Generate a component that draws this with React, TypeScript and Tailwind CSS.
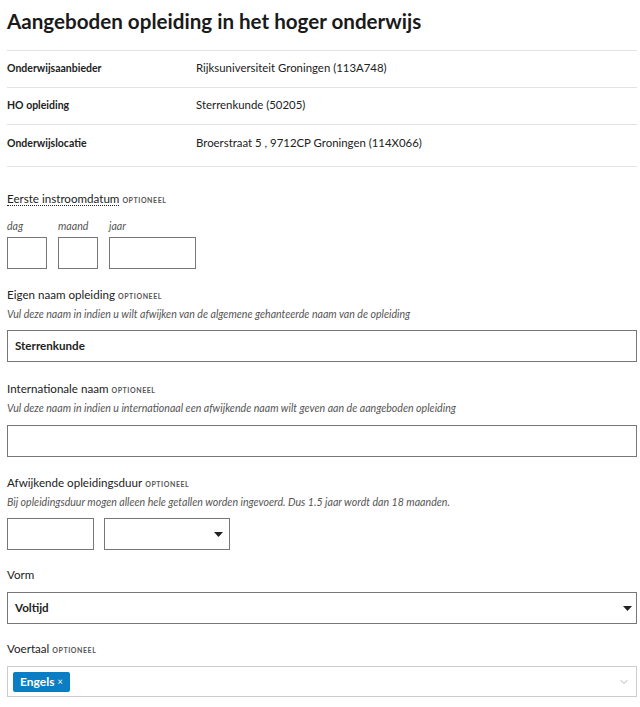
import { ChevronDown } from 'lucide-react';

const font = { fontFamily: 'Lato, "Noto Sans", sans-serif' };

function Optioneel() {
  return (
    <span className="ml-[3px] text-[7px] font-bold uppercase tracking-[0.08em] text-[#555]">optioneel</span>
  );
}

function Label({ children, optional = false }: { children: React.ReactNode; optional?: boolean }) {
  return (
    <div className="text-[11.6px] leading-[16px] text-[#222]">
      {children}
      {optional && <Optioneel />}
    </div>
  );
}

function Help({ children }: { children: React.ReactNode }) {
  return <div className="mt-[3px] text-[10.6px] italic leading-[14px] text-[#555]">{children}</div>;
}

function Caret() {
  return (
    <svg width="9" height="5" viewBox="0 0 9 5" className="shrink-0">
      <path d="M0 0h9L4.5 5z" fill="#222" />
    </svg>
  );
}

const rows = [
  ['Onderwijsaanbieder', 'Rijksuniversiteit Groningen (113A748)'],
  ['HO opleiding', 'Sterrenkunde (50205)'],
  ['Onderwijslocatie', 'Broerstraat 5 , 9712CP Groningen (114X066)'],
];

export default function App() {
  return (
    <div className="min-h-[707px] bg-white pl-[7px] pr-[3px] pt-[8px] text-[#222]" style={font}>
      <h1 className="text-[20.6px] font-bold leading-[26px] text-[#1a1a1a]">
        Aangeboden opleiding in het hoger onderwijs
      </h1>

      {/* Gegevens */}
      <div className="mt-[16px] border-t border-[#e3e3e3]">
        {rows.map(([k, v], i) => (
          <div
            key={k}
            className={`flex border-b border-[#e3e3e3] ${i === 2 ? 'h-[42px] pt-[10px]' : 'h-[37px] pt-[9px]'}`}
          >
            <div className="w-[189px] text-[10.5px] font-bold leading-[16px]">{k}</div>
            <div className="text-[11.4px] leading-[16px]">{v}</div>
          </div>
        ))}
      </div>

      {/* Eerste instroomdatum */}
      <div className="mt-[24px]">
        <div className="text-[11.6px] leading-[16px]">
          <span className="border-b border-dotted border-[#222]">Eerste instroomdatum</span>
          <Optioneel />
        </div>
        <div className="mt-[11px] flex gap-[11px]">
          {[
            ['dag', 'w-[40px]'],
            ['maand', 'w-[40px]'],
            ['jaar', 'w-[87px]'],
          ].map(([l, w]) => (
            <div key={l} className="flex flex-col">
              <span className="text-[10.6px] italic leading-[14px] text-[#555]">{l}</span>
              <div className={`mt-[4px] h-[32px] border border-[#777] ${w}`} />
            </div>
          ))}
        </div>
      </div>

      {/* Eigen naam */}
      <div className="mt-[18px]">
        <Label optional>Eigen naam opleiding</Label>
        <Help>Vul deze naam in indien u wilt afwijken van de algemene gehanteerde naam van de opleiding</Help>
        <div className="mt-[9px] flex h-[32px] items-center border border-[#777] px-[7px] text-[11.6px] font-bold">
          Sterrenkunde
        </div>
      </div>

      {/* Internationale naam */}
      <div className="mt-[19px]">
        <Label optional>Internationale naam</Label>
        <Help>Vul deze naam in indien u internationaal een afwijkende naam wilt geven aan de aangeboden opleiding</Help>
        <div className="mt-[10px] h-[32px] border border-[#777]" />
      </div>

      {/* Opleidingsduur */}
      <div className="mt-[18px]">
        <Label optional>Afwijkende opleidingsduur</Label>
        <Help>Bij opleidingsduur mogen alleen hele getallen worden ingevoerd. Dus 1.5 jaar wordt dan 18 maanden.</Help>
        <div className="mt-[9px] flex gap-[10px]">
          <div className="h-[32px] w-[87px] border border-[#777]" />
          <div className="flex h-[32px] w-[126px] items-center justify-end border border-[#777] pr-[6px]">
            <Caret />
          </div>
        </div>
      </div>

      {/* Vorm */}
      <div className="mt-[17px]">
        <Label>Vorm</Label>
        <div className="mt-[9px] flex h-[32px] items-center justify-between border border-[#777] pl-[7px] pr-[4px] text-[11.6px] font-bold">
          Voltijd
          <Caret />
        </div>
      </div>

      {/* Voertaal */}
      <div className="mt-[17px]">
        <Label optional>Voertaal</Label>
        <div className="mt-[8px] flex h-[31px] items-center justify-between border border-[#ccc] pl-[5px] pr-[6px]">
          <span className="flex h-[20px] items-center rounded-[2px] bg-[#0b7ec3] px-[7px] text-[12px] font-bold text-white">
            Engels
            <span className="ml-[3px] text-[9px] font-normal">×</span>
          </span>
          <ChevronDown className="h-[12px] w-[12px] text-[#888]" strokeWidth={1.25} />
        </div>
      </div>
    </div>
  );
}
